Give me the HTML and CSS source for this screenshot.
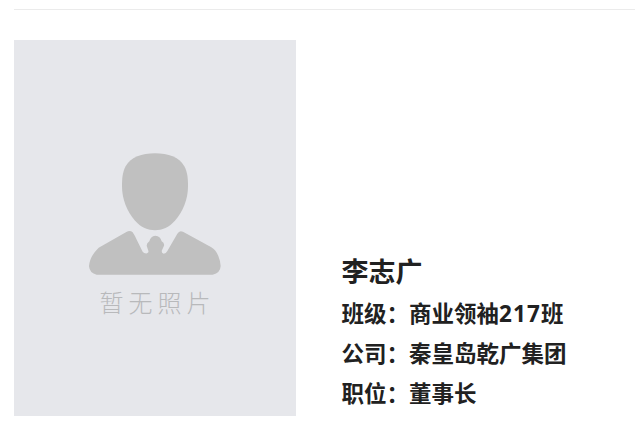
FILE: index.html
```html
<!DOCTYPE html>
<html lang="zh-CN">
<head>
  <meta charset="UTF-8">
  <meta name="viewport" content="width=device-width, initial-scale=1.0">
  <title>李志广</title>
  <link rel="stylesheet" href="styles.css">
</head>
<body>
  <div class="profile">
    <div class="photo">
      <svg class="avatar" viewBox="0 0 396 366" aria-hidden="true">
        <path d="M198 1C238 1 270 12 286 40C296 58 297 80 297 100C297 138 282 175 259 202C240 224 219 232 198 232C177 232 156 224 137 202C114 175 99 138 99 100C99 80 100 58 110 40C126 12 158 1 198 1Z"/>
        <path d="M112 237Q123 231 131 238Q138 248 145 264L161 296Q165 302 174 301Q180 299 178 293L173 278Q173 270 181 265Q184 250 199 248Q214 249 218 265Q227 270 225 278L218 294Q218 301 224 302Q231 302 235 294L265 242Q271 231 282 236L367 283Q380 290 388 309Q395 326 395 339Q394 360 371 365H23Q2 361 0 340Q2 310 29 284Z"/>
      </svg>
      <p class="photo-text">暂无照片</p>
    </div>
    <div class="info">
      <h2>李志广</h2>
      <p>班级：商业领袖<span class="num">217</span>班</p>
      <p>公司：秦皇岛乾广集团</p>
      <p>职位：董事长</p>
    </div>
  </div>
</body>
</html>
```
FILE: styles.css
```css
* {
  box-sizing: border-box;
  margin: 0;
  padding: 0;
}

body {
  background: #fff;
  font-family: 'Noto Sans CJK SC', sans-serif;
  color: #212121;
  padding: 9px 0 0 14px;
}

.profile {
  display: flex;
  align-items: flex-end;
  border-top: 1px solid #ebebeb;
  padding-top: 30px;
}

.photo {
  display: flex;
  flex-direction: column;
  align-items: center;
  width: 282px;
  height: 376px;
  padding-top: 113px;
  background: #e6e7eb;
}

.avatar {
  width: 132px;
  height: 122px;
  fill: #c0c0c0;
}

.photo-text {
  margin: 8px 0 0 5px;
  font-size: 24px;
  font-weight: 300;
  line-height: 38px;
  letter-spacing: 5px;
  color: #b8b9bb;
}

.info {
  margin-left: 45.5px;
  padding-bottom: 4px;
  font-weight: 700;
  white-space: nowrap;
}

.info h2 {
  font-size: 27px;
  line-height: 42px;
  margin-bottom: 1px;
}

.info p {
  font-size: 22.5px;
  line-height: 39.5px;
}

.num {
  font-family: 'Open Sans', sans-serif;
  letter-spacing: 1.1px;
}
```
